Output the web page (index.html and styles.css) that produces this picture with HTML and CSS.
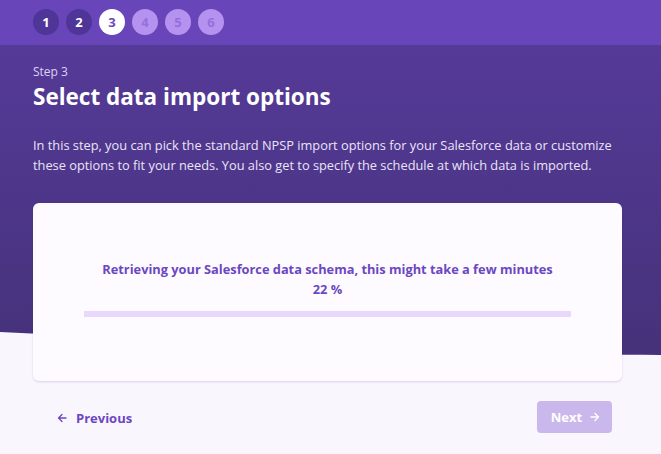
FILE: index.html
```html
<!DOCTYPE html>
<html>
<head>
<meta charset="utf-8">
<link rel="stylesheet" href="styles.css">
</head>
<body>
<header class="stepper">
  <span class="step done">1</span>
  <span class="step done">2</span>
  <span class="step current">3</span>
  <span class="step todo">4</span>
  <span class="step todo">5</span>
  <span class="step todo">6</span>
</header>
<main class="main">
  <svg class="backdrop" viewBox="0 0 661 310" preserveAspectRatio="none" aria-hidden="true">
    <defs>
      <linearGradient id="g" x1="0" y1="0" x2="0" y2="1">
        <stop offset="0" stop-color="#553a98"/>
        <stop offset="1" stop-color="#45327a"/>
      </linearGradient>
    </defs>
    <path d="M0 0 H661 V310 C 470 309 220 298 0 287 Z" fill="url(#g)"/>
  </svg>
  <div class="content">
    <p class="kicker">Step 3</p>
    <h1 class="title">Select data import options</h1>
    <p class="desc">In this step, you can pick the standard NPSP import options for your Salesforce data or customize these options to fit your needs. You also get to specify the schedule at which data is imported.</p>
    <section class="card">
      <p class="status">Retrieving your Salesforce data schema, this might take a few minutes</p>
      <p class="pct">22 %</p>
      <div class="bar"><div class="fill" style="width:0%"></div></div>
    </section>
    <nav class="actions">
      <button class="prev"><svg width="10" height="10" viewBox="0 0 10 10"><path d="M9 5H1.5M5 1.5L1.5 5L5 8.5" fill="none" stroke="currentColor" stroke-width="1.3" stroke-linecap="round" stroke-linejoin="round"/></svg><span>Previous</span></button>
      <button class="next" disabled><span>Next</span><svg width="10" height="10" viewBox="0 0 10 10"><path d="M1 5H8.5M5 1.5L8.5 5L5 8.5" fill="none" stroke="currentColor" stroke-width="1.3" stroke-linecap="round" stroke-linejoin="round"/></svg></button>
    </nav>
  </div>
</main>
</body>
</html>
```

FILE: styles.css
```css
* { box-sizing: border-box; }
html, body { margin: 0; padding: 0; }
body {
  width: 661px;
  height: 454px;
  overflow: hidden;
  background: #faf6fe;
  font-family: "Open Sans", "Noto Sans", sans-serif;
}
.stepper {
  height: 45px;
  background: #6845b9;
  display: flex;
  align-items: center;
  gap: 7px;
  padding-left: 33px;
  padding-bottom: 2px;
}
.step {
  width: 26px;
  height: 26px;
  border-radius: 50%;
  display: flex;
  align-items: center;
  justify-content: center;
  font-size: 13px;
  font-weight: 700;
}
.step.done { background: #4f3597; color: #fff; }
.step.current { background: #fff; color: #6b47c1; }
.step.todo { background: #b592ef; color: #9370dc; }
.main { position: relative; }
.backdrop {
  position: absolute;
  top: 0;
  left: 0;
  width: 661px;
  height: 310px;
  display: block;
}
.content {
  position: relative;
  padding: 19px 39px 0 33px;
}
.kicker {
  margin: 0;
  font-size: 12px;
  line-height: 16px;
  color: #ddd3f2;
}
.title {
  margin: 0;
  font-size: 22.5px;
  line-height: 33px;
  font-weight: 700;
  color: #fff;
}
.desc {
  margin: 23px 0 0;
  font-size: 12.8px;
  line-height: 19.5px;
  color: #ebe4f7;
}
.card {
  margin-top: 28px;
  height: 178px;
  background: #fdfbff;
  border-radius: 6px;
  box-shadow: 0 1px 2px rgba(60, 40, 110, 0.18);
  padding: 56px 51px 0;
  text-align: center;
}
.status, .pct {
  margin: 0;
  font-size: 12.8px;
  line-height: 20px;
  font-weight: 700;
  color: #6b47c1;
}
.bar {
  margin-top: 12px;
  height: 6px;
  background: #e8d8fb;
}
.fill { height: 100%; background: #6b47c1; }
.actions {
  display: flex;
  justify-content: space-between;
  align-items: center;
  margin-top: 20px;
  padding: 0 10px 0 24px;
}
button {
  font-family: inherit;
  border: 0;
  display: flex;
  align-items: center;
  font-size: 13px;
  font-weight: 700;
}
.prev {
  background: none;
  color: #6b47c1;
  padding: 0 0 0 0;
  gap: 9px;
  margin-top: 1px;
}
.next {
  background: #cab8ec;
  color: #fff;
  height: 32px;
  width: 75px;
  border-radius: 4px;
  justify-content: center;
  gap: 8px;
  padding: 0 0 0 2px;
}
```
